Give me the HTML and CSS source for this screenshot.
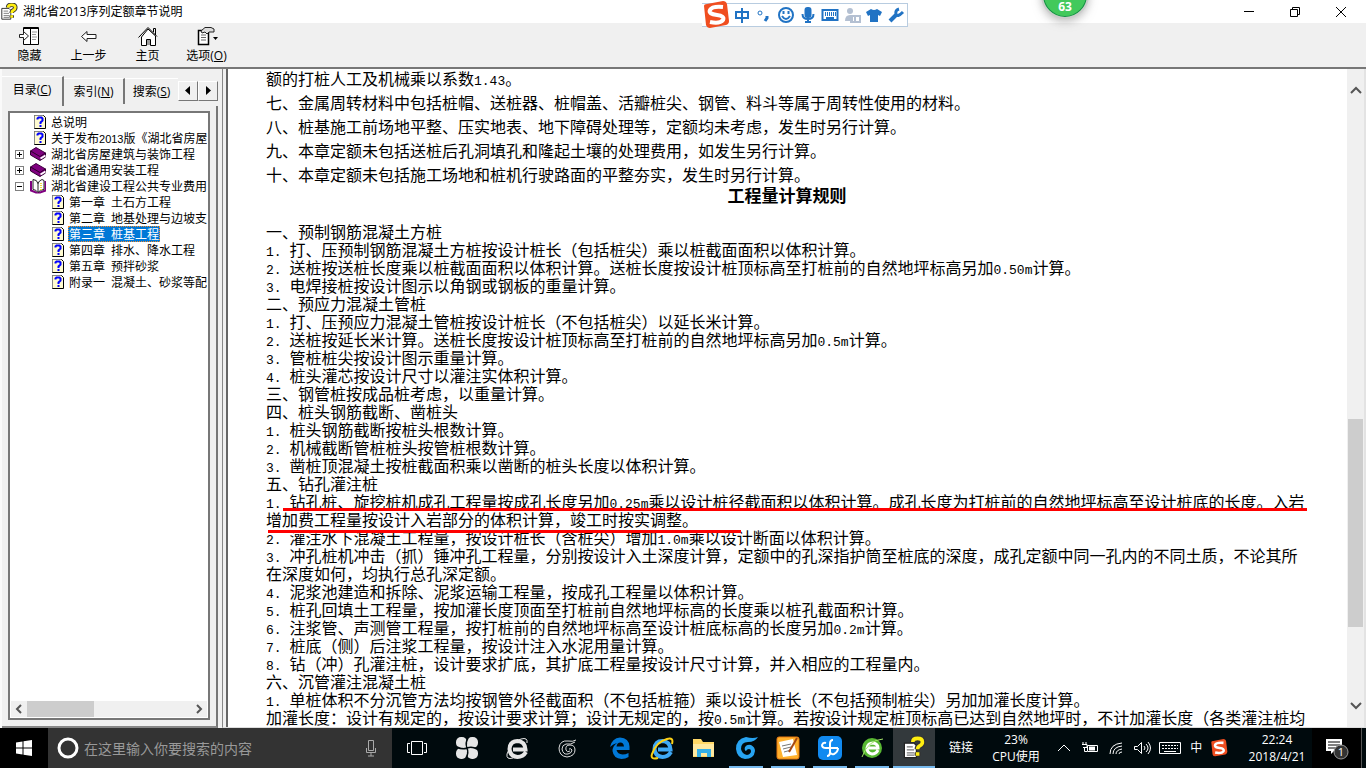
FILE: index.html
```html
<!DOCTYPE html>
<html lang="zh-CN">
<head>
<meta charset="utf-8">
<title>湖北省2013序列定额章节说明</title>
<link rel="stylesheet" href="styles.css">
</head>
<body>
<svg class="defs" aria-hidden="true">
  <symbol id="doc" viewBox="0 0 16 16">
    <path d="M4.5 1.5h9l2 2v11h-11z" fill="#fffbd0" stroke="#000"/>
    <path d="M4.5 14V1.500h8.500" fill="none" stroke="#888"/>
    <path d="M7.500 5.500V4.500l1-1h3l1 1v2l-2 2v1.500M10.500 11v2" fill="none" stroke="#00f" stroke-width="2"/>
  </symbol>
  <symbol id="book" viewBox="0 0 16 16">
    <path d="M.5 5L6 1.500l9.500 5.500L10 11z" fill="#800080" stroke="#400040"/>
    <path d="M.5 5v4l9.500 5.500 5.500-3.500V7L10 10.500z" fill="#800080" stroke="#300030"/>
    <path d="M10.500 12.500l5-3" stroke="#fff" stroke-width="2"/>
  </symbol>
  <symbol id="open" viewBox="0 0 16 16">
    <path d="M1 3v9.500l5 2h4l5.500-2V3" fill="#fff" stroke="#800080" stroke-width="2"/>
    <path d="M3 1.500q4 0 5 4 1-3 4-4l2 1v9q-4 0-6 3-2-3-5-3z" fill="#fff" stroke="#222"/>
    <path d="M8 5v9" stroke="#222"/><path d="M11 5v7" stroke="#eedc40" stroke-width="2" stroke-dasharray="1 1"/>
  </symbol>
  <symbol id="help" viewBox="0 0 20 20">
    <path d="M2 6h8l2 2v10H2z" fill="#fff" stroke="#222"/>
    <path d="M4 9h5M4 11.500h6M4 14h6M4 16h6" stroke="#777"/>
    <path d="M9 5q0-3 4-3t4 3q0 2-2 3t-2 3M13 13.500v3" fill="none" stroke="#333" stroke-width="5"/>
    <path d="M9 5q0-3 4-3t4 3q0 2-2 3t-2 3M13 13.500v3" fill="none" stroke="#ffee10" stroke-width="3"/>
  </symbol>
  <symbol id="sogou" viewBox="0 0 28 28">
    <path d="M2 5Q2 3 5 3L21 0q3 0 4 3l2 17q0 3-3 4L8 27q-3 0-4-3z" fill="#f04e20"/>
    <path d="M21 6Q10 5 8 9t7 5q8 1 6 5-3 4-13 2" fill="none" stroke="#fff" stroke-width="4"/>
  </symbol>
  <symbol id="eletter" viewBox="0 0 24 24">
    <path d="M21 16Q18 21 12.500 21 5 20.500 4.500 13 5 5 12.500 5q7.500 .5 8 8.500H8" fill="none" stroke="currentColor" stroke-width="4"/>
  </symbol>
</svg>

<header class="titlebar">
  <svg class="i18"><use href="#help"/></svg>
  <h1 class="title">湖北省2013序列定额章节说明</h1>
  <div class="wincontrols">
    <button aria-label="最小化"><svg class="i12" viewBox="0 0 12 12"><path d="M1 5.500h10"/></svg></button>
    <button aria-label="还原"><svg class="i12" viewBox="0 0 12 12"><path d="M1.500 3.500h7v7h-7zM3.500 3.500v-2h7v7h-2"/></svg></button>
    <button aria-label="关闭"><svg class="i12" viewBox="0 0 12 12"><path d="M1 1l10 10M11 1L1 11"/></svg></button>
  </div>
</header>

<nav class="toolbar">
  <button><svg class="tool" viewBox="0 0 22 20"><path d="M4.500 1.500h15v17h-15z" fill="#fff" stroke="#000"/><path d="M4 2.500h16M11.500 2v16" stroke="#000"/><path d="M13 6h5M13 8.500h4M13 11h5M13 13.500h4" stroke="#999"/><path d="M.5 8.500h4v-3l5 4.500-5 4.500v-3h-4z" fill="#fff" stroke="#222"/></svg><span>隐藏</span></button>
  <button><svg class="tool" viewBox="0 0 22 20"><path d="M3.500 10.500l5.500-5v3h9v4H9v3z" fill="#fff" stroke="#222"/></svg><span>上一步</span></button>
  <button><svg class="tool" viewBox="0 0 22 20"><path d="M4.500 11v8.500h5v-6h4v6h5V10L11 3z" fill="#fff" stroke="#000"/><path d="M1.500 11.500L11 1.500l9 9M16.500 6V2.500h2V9" fill="none" stroke="#000"/><path d="M10 14h3v5h-3z" fill="#999"/></svg><span>主页</span></button>
  <button><svg class="tool" viewBox="0 0 22 20"><path d="M2.500 4.500h10v14h-10z" fill="#fff" stroke="#000" stroke-width="1.500"/><path d="M5 9h5M5 11.500h5M5 14h5" stroke="#666"/><path d="M5 5l4-3.500h6L18 3v3h-5l-2 2-2-2-3 1z" fill="#ddd" stroke="#222"/><path d="M17 11h5l-2.500 3z" fill="#000"/></svg><span>选项(<u>O</u>)</span></button>
</nav>

<main class="workspace">
  <aside class="side">
    <div class="tabs" role="tablist">
      <button class="tab active" role="tab">目录(<u>C</u>)</button>
      <button class="tab" role="tab">索引(<u>N</u>)</button>
      <button class="tab last" role="tab">搜索(<u>S</u>)</button>
      <button class="step" aria-label="向左"><svg class="i12" viewBox="0 0 12 12"><path d="M8 1v9L3 5.500z"/></svg></button>
      <button class="step" aria-label="向右"><svg class="i12" viewBox="0 0 12 12"><path d="M4 1v9l5-4.500z"/></svg></button>
    </div>
    <div class="panel">
      <div class="treebox">
        <ul class="tree">
          <li><a href="#"><i class="sp"></i><svg class="i16"><use href="#doc"/></svg><span>总说明</span></a></li>
          <li><a href="#"><i class="sp"></i><svg class="i16"><use href="#doc"/></svg><span>关于发布<b class="d">2013</b>版《湖北省房屋</span></a></li>
          <li><a href="#"><i class="ex plus"></i><svg class="i16"><use href="#book"/></svg><span>湖北省房屋建筑与装饰工程</span></a></li>
          <li><a href="#"><i class="ex plus"></i><svg class="i16"><use href="#book"/></svg><span>湖北省通用安装工程</span></a></li>
          <li><a href="#"><i class="ex"></i><svg class="i16"><use href="#open"/></svg><span>湖北省建设工程公共专业费用</span></a>
            <ul>
              <li><a href="#"><svg class="i16"><use href="#doc"/></svg><span>第一章&ensp;土石方工程</span></a></li>
              <li><a href="#"><svg class="i16"><use href="#doc"/></svg><span>第二章&ensp;地基处理与边坡支</span></a></li>
              <li><a href="#"><svg class="i16"><use href="#doc"/></svg><span class="selected">第三章&ensp;桩基工程</span></a></li>
              <li><a href="#"><svg class="i16"><use href="#doc"/></svg><span>第四章&ensp;排水、降水工程</span></a></li>
              <li><a href="#"><svg class="i16"><use href="#doc"/></svg><span>第五章&ensp;预拌砂浆</span></a></li>
              <li><a href="#"><svg class="i16"><use href="#doc"/></svg><span>附录一&ensp;混凝土、砂浆等配</span></a></li>
            </ul>
          </li>
        </ul>
        <div class="hscroll">
          <svg class="i16" viewBox="0 0 16 16"><path d="M10 4L6 8l4 4"/></svg>
          <div class="htrack"><div class="hthumb"></div></div>
          <svg class="i16" viewBox="0 0 16 16"><path d="M6 4l4 4-4 4"/></svg>
        </div>
      </div>
    </div>
  </aside>

  <section class="viewer">
    <article class="page">
      <div class="wide">
        <p>额的打桩人工及机械乘以系数<b class="n">1.43</b>。</p>
        <p>七、金属周转材料中包括桩帽、送桩器、桩帽盖、活瓣桩尖、钢管、料斗等属于周转性使用的材料。</p>
        <p>八、桩基施工前场地平整、压实地表、地下障碍处理等，定额均未考虑，发生时另行计算。</p>
        <p>九、本章定额未包括送桩后孔洞填孔和隆起土壤的处理费用，如发生另行计算。</p>
        <p>十、本章定额未包括施工场地和桩机行驶路面的平整夯实，发生时另行计算。</p>
      </div>
      <h2>工程量计算规则</h2>
      <p>一、预制钢筋混凝土方桩</p>
      <p><b class="n">1. </b>打、压预制钢筋混凝土方桩按设计桩长（包括桩尖）乘以桩截面面积以体积计算。</p>
      <p><b class="n">2. </b>送桩按送桩长度乘以桩截面面积以体积计算。送桩长度按设计桩顶标高至打桩前的自然地坪标高另加<b class="n">0.50m</b>计算。</p>
      <p><b class="n">3. </b>电焊接桩按设计图示以角钢或钢板的重量计算。</p>
      <p>二、预应力混凝土管桩</p>
      <p><b class="n">1. </b>打、压预应力混凝土管桩按设计桩长（不包括桩尖）以延长米计算。</p>
      <p><b class="n">2. </b>送桩按延长米计算。送桩长度按设计桩顶标高至打桩前的自然地坪标高另加<b class="n">0.5m</b>计算。</p>
      <p><b class="n">3. </b>管桩桩尖按设计图示重量计算。</p>
      <p><b class="n">4. </b>桩头灌芯按设计尺寸以灌注实体积计算。</p>
      <p>三、钢管桩按成品桩考虑，以重量计算。</p>
      <p>四、桩头钢筋截断、凿桩头</p>
      <p><b class="n">1. </b>桩头钢筋截断按桩头根数计算。</p>
      <p><b class="n">2. </b>机械截断管桩桩头按管桩根数计算。</p>
      <p><b class="n">3. </b>凿桩顶混凝土按桩截面积乘以凿断的桩头长度以体积计算。</p>
      <p>五、钻孔灌注桩</p>
      <p class="marked"><b class="n">1. </b>钻孔桩、旋挖桩机成孔工程量按成孔长度另加<b class="n">0.25m</b>乘以设计桩径截面积以体积计算。成孔长度为打桩前的自然地坪标高至设计桩底的长度。入岩增加费工程量按设计入岩部分的体积计算，竣工时按实调整。</p>
      <p><b class="n">2. </b>灌注水下混凝土工程量，按设计桩长（含桩尖）增加<b class="n">1.0m</b>乘以设计断面以体积计算。</p>
      <p><b class="n">3. </b>冲孔桩机冲击（抓）锤冲孔工程量，分别按设计入土深度计算，定额中的孔深指护筒至桩底的深度，成孔定额中同一孔内的不同土质，不论其所在深度如何，均执行总孔深定额。</p>
      <p><b class="n">4. </b>泥浆池建造和拆除、泥浆运输工程量，按成孔工程量以体积计算。</p>
      <p><b class="n">5. </b>桩孔回填土工程量，按加灌长度顶面至打桩前自然地坪标高的长度乘以桩孔截面积计算。</p>
      <p><b class="n">6. </b>注浆管、声测管工程量，按打桩前的自然地坪标高至设计桩底标高的长度另加<b class="n">0.2m</b>计算。</p>
      <p><b class="n">7. </b>桩底（侧）后注浆工程量，按设计注入水泥用量计算。</p>
      <p><b class="n">8. </b>钻（冲）孔灌注桩，设计要求扩底，其扩底工程量按设计尺寸计算，并入相应的工程量内。</p>
      <p>六、沉管灌注混凝土桩</p>
      <p><b class="n">1. </b>单桩体积不分沉管方法均按钢管外径截面积（不包括桩箍）乘以设计桩长（不包括预制桩尖）另加加灌长度计算。</p>
      <p>加灌长度：设计有规定的，按设计要求计算；设计无规定的，按<b class="n">0.5m</b>计算。若按设计规定桩顶标高已达到自然地坪时，不计加灌长度（各类灌注桩均</p>
    </article>
    <div class="vscroll">
      <svg class="i16" viewBox="0 0 16 16"><path d="M3 11l5-5 5 5"/></svg>
      <div class="vtrack"><div class="before"></div><div class="vthumb"></div><div class="after"></div></div>
      <svg class="i16" viewBox="0 0 16 16"><path d="M3 5l5 5 5-5"/></svg>
    </div>
  </section>
</main>

<footer class="taskbar">
  <button class="start" aria-label="开始"><svg class="i16" viewBox="0 0 16 16"><path d="M0 2.500L6.500 1.500v6H0zM7.500 1.300L16 0v7.500H7.500zM0 8.500h6.500v6L0 13.500zM7.500 8.500H16V16l-8.500-1.300z" fill="#fff"/></svg></button>
  <label class="search">
    <svg class="i24" viewBox="0 0 24 24"><circle cx="12" cy="12" r="9" fill="none" stroke="#fff" stroke-width="3"/></svg>
    <input type="text" placeholder="在这里输入你要搜索的内容" aria-label="搜索">
    <svg class="i18" viewBox="0 0 18 18" fill="none" stroke="#aaa"><path d="M6.500 1.500h5v10h-5zM4.500 9v4.500h9V9M9 14v3M6 17h6"/></svg>
  </label>
  <div class="apps first">
    <button aria-label="任务视图"><svg class="i24" viewBox="0 0 24 24" fill="none" stroke="#fff"><path d="M6.500 5.500h11v13h-11zM5 7.500H2.500v9H5M19 7.500h2.500v9H19"/></svg></button>
    <button aria-label="应用"><svg class="i24" viewBox="0 0 24 24"><g fill="#e6e6e6"><rect x="1" y="1" width="11" height="11" rx="5"/><rect x="12" y="1" width="11" height="11" rx="5"/><rect x="1" y="12" width="11" height="11" rx="5"/><rect x="12" y="12" width="11" height="11" rx="5"/><rect x="8" y="8" width="8" height="8"/></g><path d="M12 12q-5 2-10-1M12 12q-2-5 1-10M12 12q5-2 10 1M12 12q2 5-1 10" fill="none" stroke="#000a0d" stroke-width="1.500"/></svg></button>
    <button aria-label="浏览器" class="grey"><svg class="i24" viewBox="0 0 24 24"><use href="#eletter"/><path d="M22 7q1-6-6-4Q6 6 2 18q-1 6 6 4" fill="none" stroke="currentColor"/></svg></button>
    <button aria-label="旋风"><svg class="i24" viewBox="0 0 24 24" fill="none" stroke="#ddd"><path d="M21 4q-3 2-8 1-8-1-9 7 0 8 8 9 8-1 8-7 0-5-5-5-5 0-4 5 1 3 4 1M20 6q-4 3-9 2-4 1-4 5 1 6 6 5 4-1 4-4-1-2-3-1"/></svg></button>
  </div>
  <div class="apps">
    <button aria-label="Edge" class="edge"><svg class="i24" viewBox="0 0 24 24"><path d="M2 11Q4 2 12 1.500q9 .5 9.500 9V14H8.500q1 4 6 4.500 3 0 6-1.500v4q-3 2-7 2-8-.5-9-8 0-5 4.500-8Q5 8 2 11zM8.500 10.500h7.500q-.5-4-3.500-4-3.500 0-4 4z" fill="#0078d7" fill-rule="evenodd"/></svg></button>
    <button aria-label="IE" class="ie"><svg class="i24" viewBox="0 0 24 24"><use href="#eletter"/><path d="M22 8q2-7-5-5Q6 6 2 18q-2 6 6 4" fill="none" stroke="#fcd116" stroke-width="2"/></svg></button>
    <button aria-label="文件"><svg class="i24" viewBox="0 0 24 24"><path d="M1 3h8l2 3h11v15H1z" fill="#ffd867"/><path d="M1 8h21v12H1z" fill="#ffe9a0"/><path d="M5 13h14v8h-4v-4H9v4H5z" fill="#35b0e8"/></svg></button>
    <button class="run" aria-label="旋风浏览"><svg class="i24" viewBox="0 0 24 24"><path d="M24 1q-3 5-10 5-7 0-7 7 1 5 6 6 4-1 4-4 0-2-2-2-2 0-3 2-2-1-1-4 2-3 6-2 4 2 4 6-1 8-10 8-8-1-9-10Q2 3 12 1q7 2 12 0z" fill="#27a4f2"/></svg></button>
    <button class="run" aria-label="记事"><svg class="i24" viewBox="0 0 24 24"><rect x="1" y="1" width="22" height="22" rx="2" fill="#ffb12d" stroke="#e77910"/><path d="M3 6l14-3 4 16-14 2z" fill="#fff"/><path d="M6 10l9-2M7 13l8-2M8 16l7-2" stroke="#777"/><path d="M21 2l-8 14" stroke="#a64812" stroke-width="2"/></svg></button>
    <button class="run" aria-label="广联达"><svg class="i24" viewBox="0 0 24 24"><rect width="24" height="24" rx="5" fill="#118af0"/><path d="M15 4q-3 0-3 4v8q0 4-3 4M20 12H8q-4 0-4-3 1-3 4-2M12 16q1 3 4 2 4-2 4-6" fill="none" stroke="#fff" stroke-width="2"/></svg></button>
    <button class="run" aria-label="安全浏览器"><svg class="i24" viewBox="0 0 24 24"><circle cx="12" cy="12" r="10" fill="#58b832"/><path d="M18 14q-2 4-6 4-5-1-5-6 1-5 6-5 5 1 5 5H8" fill="none" stroke="#fff" stroke-width="3"/><path d="M23 3Q8 4 2 21" fill="none" stroke="#a6e86b"/></svg></button>
    <button class="run current" aria-label="帮助"><svg class="i24" viewBox="0 0 20 20"><use href="#help"/></svg></button>
  </div>
  <span class="links">链接</span>
  <div class="stack cpu"><span>23%</span><span>CPU使用</span></div>
  <div class="tray">
    <svg class="i18" viewBox="0 0 18 18"><path d="M3 12l6-6 6 6"/></svg>
    <svg class="i18" viewBox="0 0 18 18"><path d="M6.500 6.500h10v6h-10z"/><path d="M8 9.500h6" stroke-width="4"/><path d="M2 3v2M5 3v2M1 5.500h5v3H2M3.500 9v3.500H6"/></svg>
    <svg class="i18" viewBox="0 0 18 18"><path d="M3 15Q3 5 15 4M6 15q0-7 9-8M9 15q0-4 6-5M12 15q0-2 3-2"/></svg>
    <svg class="i18" viewBox="0 0 18 18"><path d="M1.500 7.500h3l4-4v11l-4-4h-3zM11 7q2 2 0 4M13 5q4 4 0 8M15 3q5 6 0 12"/></svg>
    <svg class="kbd" viewBox="0 0 24 18"><path d="M1.500 3.500h21v11h-21z"/><path d="M4 6.500h16M4 9.500h16" stroke-dasharray="2 1"/><path d="M6 12.500h12"/></svg>
    <span class="ime">中</span>
    <svg class="i18 logo" viewBox="0 0 28 28"><use href="#sogou"/></svg>
  </div>
  <div class="stack clock"><span>22:24</span><span>2018/4/21</span></div>
  <button class="notice" aria-label="通知"><svg class="i24" viewBox="0 0 24 24"><path d="M1 3h16v12H9l-3 3v-3H1z" fill="#fff"/><path d="M3 6h12M3 9h12M3 12h8" stroke="#000"/><circle cx="16" cy="16" r="7" fill="#333" stroke="#999"/></svg><span>1</span></button>
</footer>

<div class="imebar">
  <svg class="imelogo"><use href="#sogou"/></svg>
  <svg viewBox="0 0 18 18"><path d="M3 6h12v6H3zM9 2v15"/></svg>
  <svg viewBox="0 0 18 18"><circle cx="5" cy="7" r="2" stroke-width="1"/><path d="M12 10v2l-2 3"  stroke-width="3"/></svg>
  <svg viewBox="0 0 18 18"><circle cx="9" cy="9" r="7"/><path d="M5 10q4 6 8 0M6.500 5v3M11.500 5v3"/></svg>
  <svg viewBox="0 0 18 18"><rect x="6.500" y="2" width="5" height="9" rx="2" fill="#2173c4"/><path d="M3.500 8q0 5 5.500 5t5.500-5M9 13v3M6 16h6"/></svg>
  <svg viewBox="0 0 18 18"><path d="M1.500 4h15v10h-15z"/><path d="M4 7h11M4 9h11" stroke-dasharray="1 1"/><path d="M5 12h8" /></svg>
  <svg class="dim" viewBox="0 0 18 18"><circle cx="7" cy="5" r="3" fill="#b4c0d2"/><path d="M2 15q0-6 5-6h3v6z" fill="#b4c0d2"/><path d="M8 10h9v6H8zM12 10v6" fill="none" stroke="#b4c0d2"/></svg>
  <svg viewBox="0 0 18 18"><path d="M6 3q3 2 6 0l5 3-2 4-2-1v7H5V9l-2 1-2-4z" fill="#2173c4" stroke="none"/></svg>
  <svg viewBox="0 0 18 18"><path d="M3 15l6-6" stroke-width="4"/><path d="M12 3Q8 4 9 8t7-2" stroke-width="3"/></svg>
</div>
<div class="ball">63</div>
</body>
</html>
```
FILE: styles.css
```css
* { box-sizing: border-box; }
body {
  margin: 0;
  height: 100vh;
  display: grid;
  grid-template-rows: 23px 46px minmax(0, 1fr) 40px;
  overflow: hidden;
  background: #f0f0f0;
  color: #000;
  font: 12px/16px "Open Sans", "Noto Sans CJK SC", sans-serif;
  text-spacing-trim: space-all;
}
button { border: 0; padding: 0; margin: 0; background: none; color: inherit; font: inherit; }
svg { display: block; flex: none; }
a { color: inherit; text-decoration: none; }
ul { list-style: none; margin: 0; padding: 0; }
.defs { display: none; }
.i12 { width: 12px; height: 12px; }
.i16 { width: 16px; height: 16px; }
.i18 { width: 18px; height: 18px; }
.i24 { width: 24px; height: 24px; }

.titlebar { display: flex; align-items: center; gap: 5px; background: #fff; }
.title { flex: 1; margin: 0; font-size: 12px; font-weight: 400; }
.wincontrols { display: flex; height: 22px; padding-right: 2px; }
.wincontrols button { width: 46px; display: grid; place-items: center; }
.wincontrols path { fill: none; stroke: #000; }

.toolbar { display: flex; border-bottom: 2px solid #777; }
.toolbar button { width: 59px; padding-top: 3px; display: flex; flex-direction: column; align-items: center; gap: 2px; white-space: nowrap; }
.tool { width: 22px; height: 20px; }

.workspace { display: grid; grid-template-columns: 218px minmax(0, 1fr); gap: 4px; min-height: 0; }
.side { display: flex; flex-direction: column; min-height: 0; border-left: 2px solid #fafafa; padding-top: 7px; }
.tabs { display: flex; align-items: center; height: 30px; }
.tab { height: 26px; width: 61px; border-top: 1px solid #fff; border-right: 2px solid #777; white-space: nowrap; overflow: hidden; }
.tab.active { height: 30px; width: 62px; padding-bottom: 4px; }
.tab.last { width: 50px; flex: 1; border-right: 0; }
.step { width: 20px; height: 20px; display: grid; place-items: center; border: 1px solid; border-color: #fff #777 #777 #fff; }
.panel { flex: 1; min-height: 0; display: flex; padding: 5px 6px 6px 6px; border-right: 2px solid #777; border-bottom: 2px solid #888; }
.treebox { flex: 1; min-width: 0; display: flex; flex-direction: column; padding: 1px; border: 2px solid #777; background: #fff; }
.tree { flex: 1; overflow: hidden; font-family: "Noto Sans CJK SC", sans-serif; white-space: nowrap; }
.tree a { display: flex; align-items: center; gap: 4px; height: 16px; padding-left: 4px; }
.tree ul a { padding-left: 37px; }
.tree span { padding: 0 1px; }
.tree .d { font: 11px "Liberation Sans", sans-serif; }
.sp, .ex { width: 9px; height: 9px; margin-right: 2px; flex: none; }
.ex { border: 1px solid #808080; background: linear-gradient(#000, #000) center / 5px 1px no-repeat; }
.plus { background: linear-gradient(#000, #000) center / 5px 1px no-repeat, linear-gradient(#000, #000) center / 1px 5px no-repeat; }
.tree .selected { background: #0078d7; color: #fff; outline: 1px dotted #f58a28; outline-offset: -1px; }
.hscroll { display: flex; height: 16px; background: #f0f0f0; }
.hscroll path, .vscroll path { fill: none; stroke: #555; stroke-width: 2; }
.htrack { flex: 1; }
.hthumb { width: 41%; height: 16px; background: #cdcdcd; }

.viewer { display: flex; min-width: 0; min-height: 0; border-left: 1px solid #888; padding-left: 3px; border-bottom: 1px solid #ddd; overflow: hidden; }
.page { flex: 1; min-width: 0; margin-top: -3px; padding: 0 39px 0 38px; background: #fff; border-left: 2px solid #666; font: 16px/18px "Noto Sans CJK SC", sans-serif; }
.page p { margin: 0; }
.page .n { font: 13px/0 "Liberation Mono", monospace; white-space: pre-wrap; }
.page .wide { line-height: 24px; }
.page h2 { margin: 0 0 18px; font-size: 17px; line-height: 18px; font-weight: 700; text-align: center; }
.marked { position: relative; }
.marked::before, .marked::after { content: ""; position: absolute; height: 3px; background: #f00; }
.marked::before { top: 16px; left: 17px; right: 1px; }
.marked::after { top: 38px; left: 2px; width: 473px; }
.vscroll { width: 19px; flex: none; display: flex; flex-direction: column; padding: 13px 1px; background: #f0f0f0; border-right: 2px solid #e3e3e3; }
.vtrack { flex: 1; display: flex; flex-direction: column; }
.before { flex: 320; }
.vthumb { flex: 208; background: #cdcdcd; }
.after { flex: 71; }

.taskbar { display: flex; background: #000a0d; color: #fff; }
.start { width: 48px; display: grid; place-items: center; background: #000; }
.search { width: 344px; flex: 0 1 344px; display: flex; align-items: center; gap: 4px; padding: 0 12px 0 8px; background: #333; }
.search input { flex: 1; min-width: 0; border: 0; padding: 0; background: none; color: #fff; font: 14px/20px "Noto Sans CJK SC", sans-serif; outline: 0; }
.search input::placeholder { color: #999; opacity: 1; }
.apps { display: flex; }
.apps button { width: 42px; display: grid; place-items: center; }
.apps.first { padding-right: 7px; }
.apps.first button { width: 50px; }
.grey { color: #e6e6e6; }
.apps .ie { color: #3fa9f5; }
.apps .run { background: linear-gradient(#76b9ed, #76b9ed) bottom / 34px 2px no-repeat; }
.apps .current { background: linear-gradient(#76b9ed, #76b9ed) bottom / 100% 2px no-repeat #33393c; }
.links { align-self: center; margin-left: 14px; white-space: nowrap; }
.stack { display: flex; flex-direction: column; justify-content: center; text-align: center; line-height: 17px; white-space: nowrap; }
.cpu { width: 50px; margin-left: 18px; }
.tray { flex: 1; display: flex; align-items: center; justify-content: space-between; padding: 0 14px; }
.tray svg { fill: none; stroke: #fff; }
.tray .logo { stroke: none; }
.kbd { width: 24px; height: 18px; }
.clock { width: 70px; }
.notice { position: relative; width: 50px; display: grid; place-items: center; background: #000; border-right: 1px solid #555; margin-right: 4px; }
.notice span { position: absolute; left: 21px; top: 16px; width: 16px; font-size: 11px; text-align: center; }

.imebar { position: absolute; left: 702px; top: 3px; width: 206px; height: 24px; display: flex; align-items: center; gap: 4px; background: #fff; border: 1px solid #b8cce0; border-left: 0; }
.imebar svg { width: 18px; height: 18px; fill: none; stroke: #2173c4; stroke-width: 2; }
.imebar .dim { stroke: none; }
.imebar .imelogo { width: 28px; height: 28px; stroke: none; margin-right: -1px; }
.ball { position: absolute; left: 1041px; top: -29px; width: 48px; height: 48px; padding-top: 26px; border: 2px solid #ccc; border-radius: 50%; background: #42c95c; box-shadow: inset 0 0 0 1px #168c48, 0 3px 8px #8888; color: #fff; font: 700 12px/16px "Open Sans", sans-serif; text-align: center; }
```
